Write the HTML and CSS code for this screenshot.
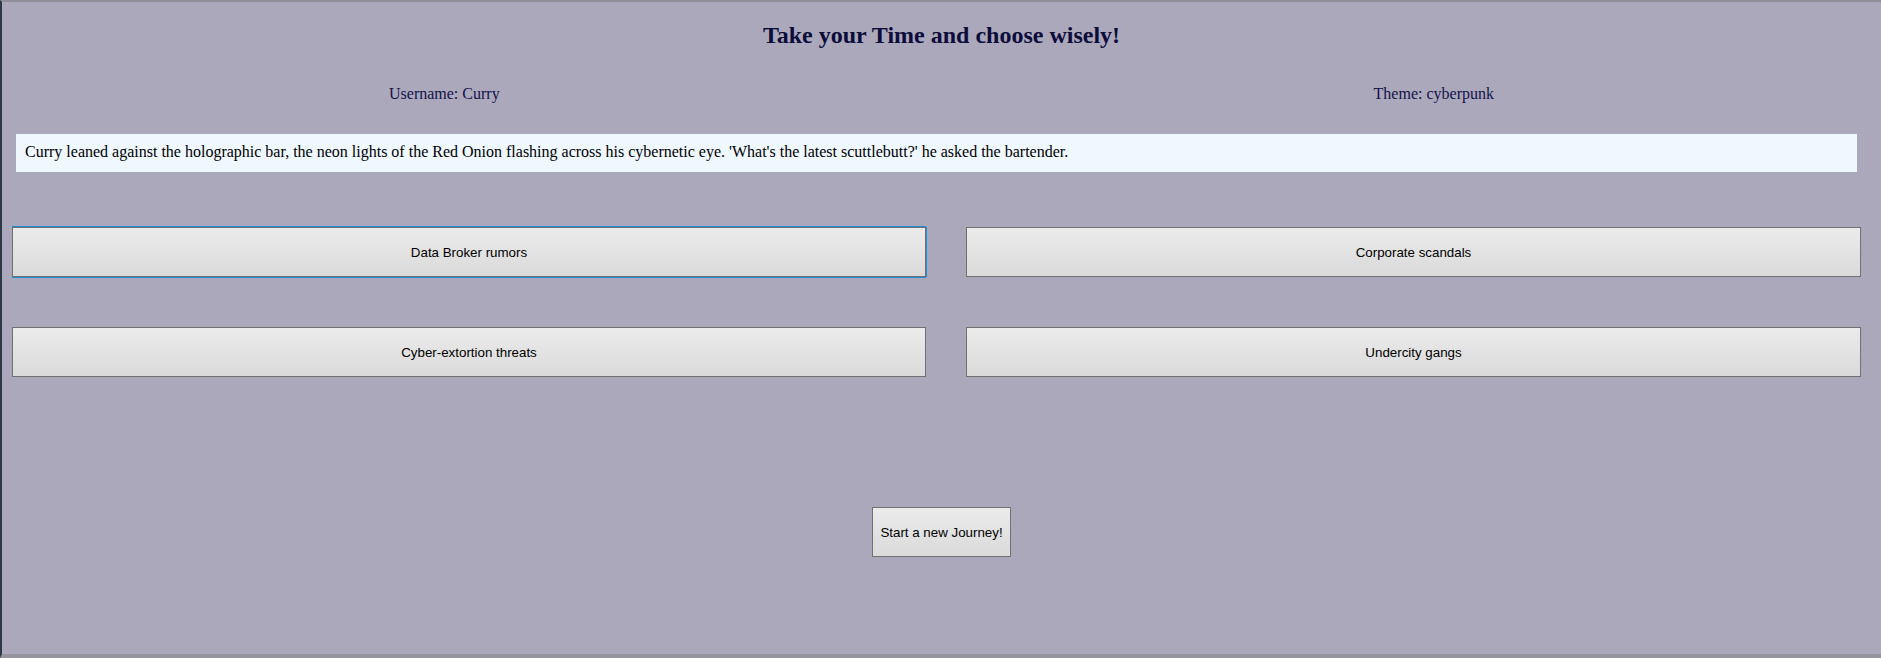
FILE: index.html
```html
<!DOCTYPE html>
<html lang="en">
<head>
<meta charset="utf-8">
<title>Take your Time and choose wisely!</title>
<link rel="stylesheet" href="styles.css">
</head>
<body>
<div class="page">
  <h2 class="title">Take your Time and choose wisely!</h2>
  <div class="meta">
    <span class="meta-item">Username: Curry</span>
    <span class="meta-item">Theme: cyberpunk</span>
  </div>
  <p class="story">Curry leaned against the holographic bar, the neon lights of the Red Onion flashing across his cybernetic eye. 'What's the latest scuttlebutt?' he asked the bartender.</p>
  <div class="choices">
    <button class="choice focused">Data Broker rumors</button>
    <button class="choice">Corporate scandals</button>
    <button class="choice">Cyber-extortion threats</button>
    <button class="choice">Undercity gangs</button>
  </div>
  <div class="restart-row">
    <button class="restart">Start a new Journey!</button>
  </div>
</div>
</body>
</html>
```
FILE: styles.css
```css
html, body {
  margin: 0;
  padding: 0;
  background: #aba8bb;
}

.page {
  box-sizing: border-box;
  height: 658px;
  border-top: 2px solid #908e9b;
  border-left: 2px solid #2a3944;
  border-bottom: 4px solid #94939e;
  background: #aba8bb;
  font-family: "Liberation Serif", "Times New Roman", serif;
  display: flex;
  flex-direction: column;
}

.title {
  margin: 19px 0 0;
  font-size: 24px;
  line-height: 28px;
  font-weight: bold;
  text-align: center;
  color: #0c0c3a;
}

.meta {
  display: flex;
  justify-content: space-between;
  margin-top: 36px;
  padding: 0 387px 0 387px;
  font-size: 16px;
  color: #12124a;
}

.story {
  margin: 31px 24px 0 14px;
  padding: 9px 9px 11px;
  background: #eff7ff;
  font-size: 16px;
  line-height: 18px;
  color: #000;
}

.choices {
  display: grid;
  grid-template-columns: 914px 895px;
  column-gap: 40px;
  row-gap: 50px;
  margin-top: 55px;
  padding-left: 10px;
}

.choice, .restart {
  font-family: "Liberation Sans", Arial, sans-serif;
  font-size: 13.33px;
  color: #000;
  background: linear-gradient(#ebebeb, #dadada);
  border: 1px solid #707070;
  border-radius: 0;
  margin: 0;
}

.choice {
  height: 50px;
  padding: 0 6px;
}

.choice.focused {
  box-shadow: 0 -1px 0 #1d8fdc, 0 1px 0 #1d8fdc, 1px 0 0 #1d8fdc;
}

.restart-row {
  display: flex;
  justify-content: center;
  margin-top: 130px;
}

.restart {
  height: 50px;
  padding: 0 7px;
}
```
